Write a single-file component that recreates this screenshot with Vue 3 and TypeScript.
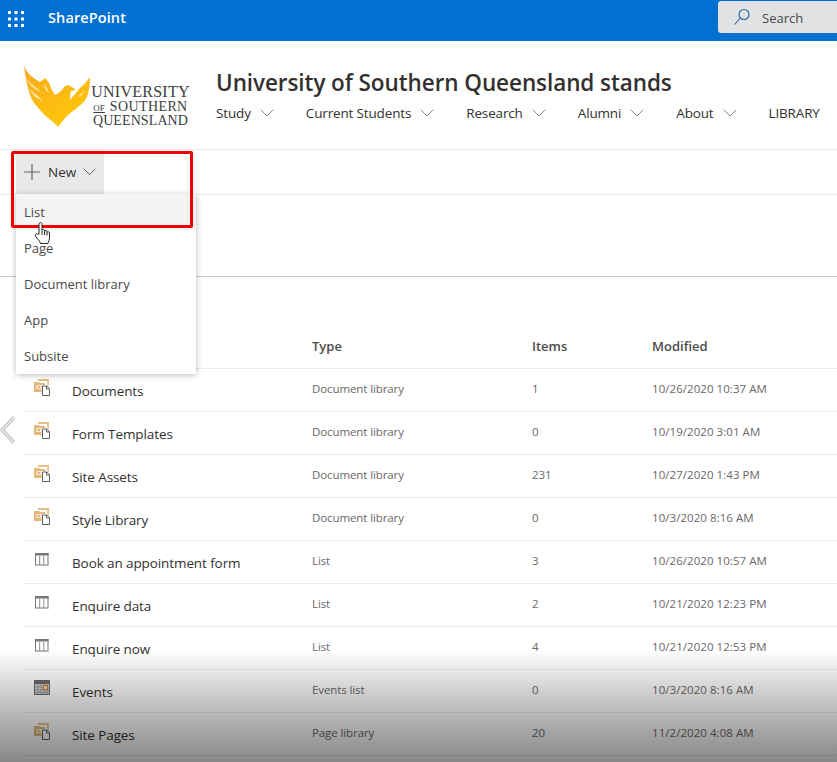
<script setup lang="ts">
type Kind = 'lib' | 'list' | 'cal'
interface Row { name: string; type: string; items: string; modified: string; kind: Kind }
const rows: Row[] = [
  { name: 'Documents', type: 'Document library', items: '1', modified: '10/26/2020 10:37 AM', kind: 'lib' },
  { name: 'Form Templates', type: 'Document library', items: '0', modified: '10/19/2020 3:01 AM', kind: 'lib' },
  { name: 'Site Assets', type: 'Document library', items: '231', modified: '10/27/2020 1:43 PM', kind: 'lib' },
  { name: 'Style Library', type: 'Document library', items: '0', modified: '10/3/2020 8:16 AM', kind: 'lib' },
  { name: 'Book an appointment form', type: 'List', items: '3', modified: '10/26/2020 10:57 AM', kind: 'list' },
  { name: 'Enquire data', type: 'List', items: '2', modified: '10/21/2020 12:23 PM', kind: 'list' },
  { name: 'Enquire now', type: 'List', items: '4', modified: '10/21/2020 12:53 PM', kind: 'list' },
  { name: 'Events', type: 'Events list', items: '0', modified: '10/3/2020 8:16 AM', kind: 'cal' },
  { name: 'Site Pages', type: 'Page library', items: '20', modified: '11/2/2020 4:08 AM', kind: 'lib' },
]
const nav = ['Study', 'Current Students', 'Research', 'Alumni', 'About']
const menu = ['List', 'Page', 'Document library', 'App', 'Subsite']
const dots = [0, 1, 2].flatMap((y) => [0, 1, 2].map((x) => ({ x: 1 + x * 6.5, y: 1 + y * 6.5 })))
</script>

<template>
  <div class="page">
    <header class="topbar">
      <svg class="waffle" width="16" height="16" viewBox="0 0 16 16">
        <rect v-for="(d, i) in dots" :key="i" :x="d.x - 1" :y="d.y - 1" width="3" height="3" fill="#fff" />
      </svg>
      <span class="brand">SharePoint</span>
      <div class="search">
        <svg width="18" height="18" viewBox="0 0 18 18" fill="none" stroke="#1f5fa8" stroke-width="1.1">
          <circle cx="11" cy="6.5" r="5" />
          <path d="M7.4 10 1.5 16.5" />
        </svg>
        <span class="search-label">Search</span>
      </div>
    </header>

    <section class="site">
      <div class="logo">
        <svg class="bird" width="66" height="64" viewBox="0 0 66 64">
          <defs>
            <linearGradient id="wing" x1="0" y1="0" x2="0.5" y2="1">
              <stop offset="0" stop-color="#f6a91e" />
              <stop offset="1" stop-color="#ffc60b" />
            </linearGradient>
          </defs>
          <path fill="url(#wing)" d="M0 1C1 5 3 8 6 11C9 14 13 16 16 18C18 17 20 15 21 14C23 16 25 18 26 21C27 25 29 28 31 31C33 30 36 28 38 26C39 24 40 23 41 22C44 21 46 22 48 23L52 26L47 27C46 30 46 33 46 36C49 32 53 28 56 24C60 21 63 17 66 13C66 21 65 27 63 33C61 37 58 40 54 43C51 46 47 48 44 51C40 55 37 59 34 63C32 61 31 59 29 58C25 55 20 51 16 46C12 42 8 37 6 31C3 22 1 11 0 1Z" />
          <path fill="#fff" opacity=".6" d="M2 14C6 19 11 22 17 28C11 26 5 21 2 14ZM5 24C9 29 14 31 19 37C13 35 8 31 5 24ZM20 20C22 22 24 26 25 29C22 27 20 24 20 20ZM55 31C57 30 59 28 61 26C60 29 58 31 55 33Z" />
        </svg>
        <div class="logo-text">
          <div class="l1">UNIVERSITY</div>
          <div class="l2"><span class="of">OF</span> SOUTHERN</div>
          <div class="l3">QUEENSLAND</div>
        </div>
      </div>
      <div class="site-main">
        <h1>University of Southern Queensland stands</h1>
        <nav class="nav">
          <span v-for="n in nav" :key="n" class="nav-item">
            {{ n }}
            <svg width="14" height="8" viewBox="0 0 14 8" fill="none" stroke="#8a8886"><path d="M.7.7 7 7 13.3.7" /></svg>
          </span>
          <span class="nav-item">LIBRARY</span>
        </nav>
      </div>
    </section>

    <div class="commands">
      <button class="new">
        <svg width="18" height="18" viewBox="0 0 18 18" stroke="#69686a" stroke-width="1.2"><path d="M9 1v16M1 9h16" /></svg>
        <span>New</span>
        <svg width="13" height="8" viewBox="0 0 13 8" fill="none" stroke="#69686a"><path d="M.7.7 6.5 6.5 12.3.7" /></svg>
      </button>
    </div>

    <div class="title-gap"></div>

    <main class="content">
      <div class="thead">
        <span class="c-name"></span>
        <span class="c-type">Type</span>
        <span class="c-items">Items</span>
        <span class="c-mod">Modified</span>
      </div>
      <div v-for="r in rows" :key="r.name" class="row">
        <span class="c-icon">
          <svg v-if="r.kind === 'lib'" width="16" height="17" viewBox="0 0 16 17">
            <path fill="#e6c088" d="M4 0h11v2H4z" />
            <path fill="#eac795" d="M13 2h2v5h-2z" />
            <path fill="#e3b878" d="M0 3h5l1 1h5v9H0z" />
            <rect x="2.5" y="6" width="5" height="4" fill="#f6ead6" />
            <rect x="4" y="7.2" width="2" height="1.6" fill="#d6a868" />
            <path fill="#fff" d="M7.5 6h5.7L16 8.6V17H7.5z" />
            <path fill="#fff" stroke="#5f5e5d" d="M8.5 7h4.3l2.7 2.7v6.8h-7z" />
            <path fill="none" stroke="#5f5e5d" d="M12.5 7v3h3" />
          </svg>
          <svg v-else-if="r.kind === 'list'" width="14" height="13" viewBox="0 0 14 13" class="ico-list">
            <rect x=".5" y=".5" width="12.5" height="11.5" fill="#fff" stroke="#77767a" />
            <rect x="0" y="0" width="13.5" height="2.5" fill="#77767a" />
            <path stroke="#8a898c" d="M4.7 3v9M8.8 3v9" />
          </svg>
          <svg v-else width="16" height="15" viewBox="0 0 16 15">
            <rect x=".5" y=".5" width="15" height="14" fill="#d5d3d0" stroke="#6b6a69" />
            <rect x="0" y="0" width="16" height="4" fill="#6b6a69" />
            <path stroke="#8f8d8a" stroke-width=".7" d="M4 4v10M7 4v10M10 4v10M13 4v10M1 7h14M1 10h14M1 12.5h14" />
            <rect x="9.5" y="5.5" width="4" height="4" fill="#e8dcc4" stroke="#c8792e" />
          </svg>
        </span>
        <span class="c-name2">{{ r.name }}</span>
        <span class="c-type small">{{ r.type }}</span>
        <span class="c-items small">{{ r.items }}</span>
        <span class="c-mod small mod">{{ r.modified }}</span>
      </div>
    </main>

    <div class="fade"></div>

    <svg class="back" width="16" height="28" viewBox="0 0 16 28" fill="none">
      <path d="M14 1.5 2 14l12 12.5" stroke="#bdbcbb" stroke-width="3.4" />
      <path d="M14 1.5 2 14l12 12.5" stroke="#f1f1f1" stroke-width="1.2" />
    </svg>

    <div class="menu">
      <div v-for="(m, i) in menu" :key="m" class="menu-item" :class="{ hot: i === 0 }">{{ m }}</div>
    </div>

    <div class="callout"></div>

    <svg class="hand" width="18" height="24" viewBox="0 0 18 24" fill="#fff" stroke="#222" stroke-width="1" stroke-linejoin="round">
      <path d="M5 13V3.2C5 1 8 1 8 3.2V9.5C8 8.2 10.6 8.2 10.6 9.5V10.5C10.6 9.2 13 9.2 13 10.5V11.5C13 10.4 15.4 10.4 15.5 12V16.5C15.5 19 14.6 20 14 22.5H6.5C5.8 20 3.6 18 1.8 15.6C.4 13.5 2.6 12 4 13.4Z" />
      <path d="M8 10v4M10.6 10.5v3.5M13 11.5v3" />
    </svg>
  </div>
</template>

<style>
html, body { margin: 0; background: #fff; }
</style>

<style scoped>
.page {
  position: relative;
  width: 837px;
  height: 762px;
  overflow: hidden;
  background: #fff;
  color: #323130;
  font-family: "Open Sans", "Noto Sans", sans-serif;
}
.topbar {
  height: 41px;
  background: #0070d1;
  display: flex;
  align-items: center;
  padding-left: 8px;
  box-sizing: border-box;
}
.waffle { margin-right: 24px; margin-top: -4px; }
.brand { color: #fff; font-size: 14.5px; font-weight: 600; margin-top: -6px; letter-spacing: .1px; }
.search {
  margin-left: auto;
  width: 119px;
  height: 32px;
  margin-top: -8px;
  background: #e0e2e4;
  border-radius: 3px 0 0 3px;
  display: flex;
  align-items: center;
  box-sizing: border-box;
  padding-left: 15px;
  gap: 11px;
  font-size: 13px;
  color: #4a4a48;
}
.search-label { padding-top: 2px; }
.site {
  height: 109px;
  box-sizing: border-box;
  border-bottom: 1px solid #edebe9;
  display: flex;
}
.logo { width: 216px; position: relative; flex: none; }
.bird { position: absolute; left: 24px; top: 23px; }
.logo-text {
  position: absolute;
  left: 91px;
  top: 43px;
  font-family: "Liberation Serif", serif;
  color: #3d3e40;
  text-align: center;
  width: 99px;
}
.l1 { font-size: 16px; line-height: 16px; letter-spacing: .25px; white-space: nowrap; }
.l2 { font-size: 14px; line-height: 14px; letter-spacing: .4px; white-space: nowrap; }
.l3 { font-size: 14px; line-height: 12px; letter-spacing: .1px; white-space: nowrap; }
.of { font-size: 9px; text-decoration: underline; letter-spacing: 0; margin-right: 1px; }
.site-main { flex: 1; min-width: 0; padding-top: 26px; }
h1 {
  margin: 0;
  font-size: 22.5px;
  line-height: 32px;
  font-weight: 600;
  letter-spacing: -.08px;
  white-space: nowrap;
  color: #323130;
}
.nav { display: flex; gap: 32px; margin-top: 4px; font-size: 13.5px; line-height: 20px; white-space: nowrap; letter-spacing: -.15px; }
.nav-item { display: inline-flex; align-items: center; gap: 9px; }
.commands { height: 44px; padding-left: 16px; border-bottom: 1px solid #edebe9; }
.new {
  height: 44px;
  width: 88px;
  border: 0;
  background: #e9e9e9;
  display: flex;
  align-items: center;
  padding: 0 0 0 7px;
  gap: 7px;
  font: inherit;
  font-size: 13.5px;
  color: #323130;
}
.title-gap { height: 81px; border-bottom: 1px solid #c8c6c4; }
.content { padding: 0 0 0 24px; }
.thead {
  display: flex;
  height: 92px;
  box-sizing: border-box;
  align-items: flex-end;
  padding-bottom: 13px;
  font-size: 13px;
  font-weight: 600;
  color: #4d4c4a;
  border-bottom: 1px solid #edebe9;
}
.c-name { width: 288px; flex: none; }
.row {
  display: flex;
  height: 43px;
  box-sizing: border-box;
  border-bottom: 1px solid #edebe9;
  align-items: center;
  font-size: 13.5px;
}
.c-icon { width: 48px; flex: none; display: flex; padding: 0 0 0 10px; box-sizing: border-box; align-self: flex-start; margin-top: 10px; }
.ico-list { margin-left: 1px; margin-top: 2px; }
.c-name2 { width: 240px; flex: none; padding-top: 1px; letter-spacing: -.1px; white-space: nowrap; }
.c-type { width: 220px; flex: none; }
.c-items { width: 120px; flex: none; }
.c-mod { flex: 1; white-space: nowrap; }
.small { font-size: 11.5px; color: #6a6867; letter-spacing: -.1px; margin-top: -4px; }
.mod { letter-spacing: .05px; }
.fade {
  position: absolute;
  left: 0; right: 0; bottom: 0;
  height: 112px;
  background: linear-gradient(to bottom, rgba(0,0,0,0), rgba(0,0,0,.25) 50%, rgba(0,0,0,.47));
  pointer-events: none;
}
.back { position: absolute; left: 0; top: 416px; }
.menu {
  position: absolute;
  left: 16px; top: 194px;
  width: 180px;
  background: #fff;
  box-shadow: 0 1px 6px rgba(0,0,0,.28);
}
.menu-item { height: 36px; line-height: 36px; padding-left: 8px; font-size: 13px; color: #4a4947; }
.hot { background: #f4f4f4; }
.callout {
  position: absolute;
  left: 11px; top: 151px;
  width: 182px; height: 77px;
  box-sizing: border-box;
  border: 3px solid #f00000;
  border-radius: 2px;
}
.hand { position: absolute; left: 34px; top: 221px; }
</style>
